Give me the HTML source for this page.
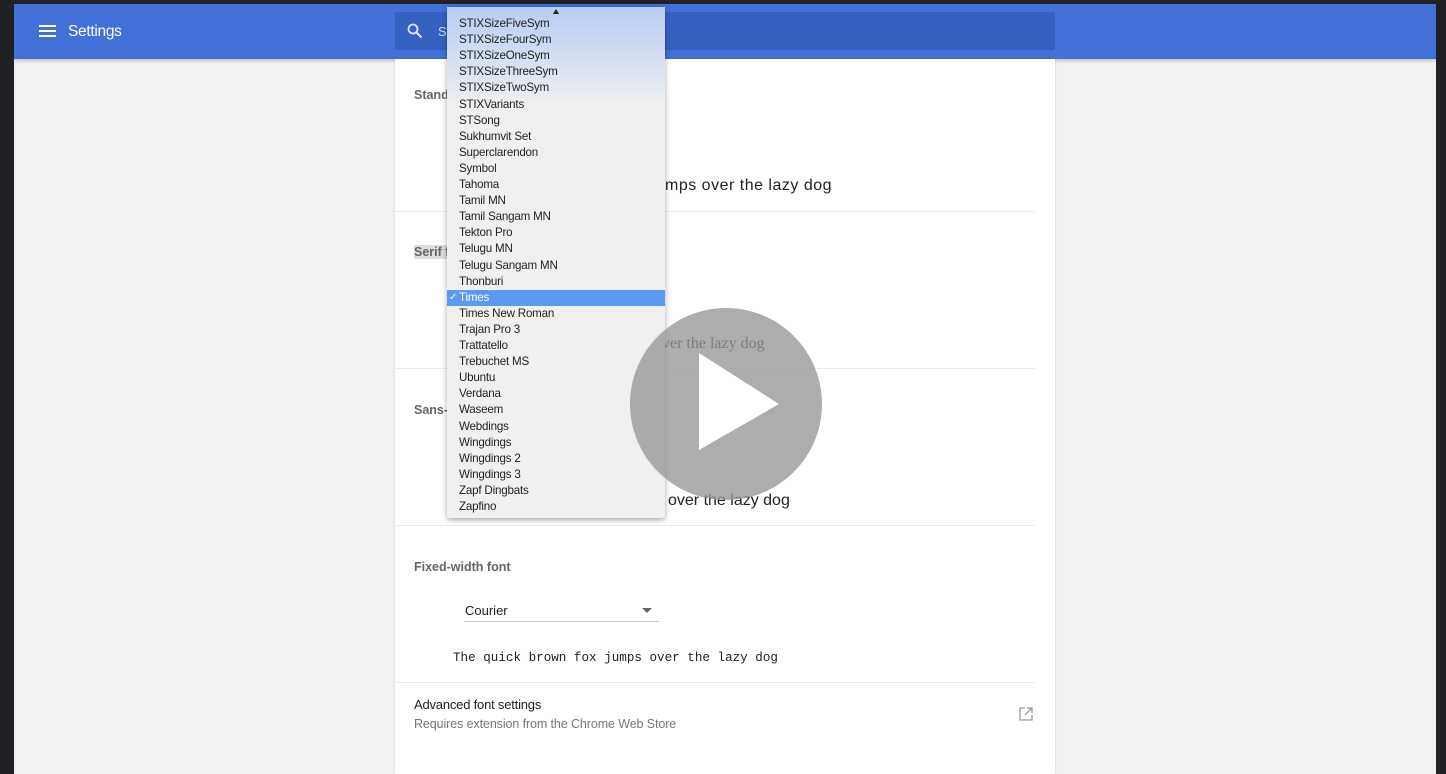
<!DOCTYPE html>
<html><head><meta charset="utf-8"><style>
*{margin:0;padding:0;box-sizing:border-box}
body{width:1446px;height:774px;background:#1f2124;position:relative;overflow:hidden;font-family:"Liberation Sans",sans-serif}
#page{position:absolute;left:14px;top:4px;width:1422px;height:770px;background:#f1f1f1}
#hdr{position:absolute;left:14px;top:4px;width:1422px;height:55px;background:#4070d8;box-shadow:0 2px 3px rgba(0,0,0,.2)}
#search{position:absolute;left:395px;top:12px;width:660px;height:38px;background:#3561c3;border-radius:2px}
#card{position:absolute;left:395px;top:59px;width:660px;height:715px;background:#fff;box-shadow:0 0 2px rgba(0,0,0,.15)}
.t{position:absolute;white-space:nowrap}
.lbl{font-size:12.5px;color:#666;font-weight:bold}
.sep{position:absolute;left:395px;width:640px;height:1px;background:#ececec}
#dd{position:absolute;left:447px;top:7px;width:218px;height:511px;background:#f0f0f0;border-radius:3px;box-shadow:0 2px 6px rgba(0,0,0,.35)}
#dd .g{position:absolute;left:0;top:0;width:218px;height:100px;background:linear-gradient(#b8cdf2,rgba(240,240,240,0))}
.it{position:absolute;left:12px;font-size:11.6px;color:#222;height:16px;line-height:16px;letter-spacing:-0.2px}
#sel{position:absolute;left:0;top:283px;width:218px;height:16px;background:#5a9af3}
</style></head><body>
<div id="page"></div>
<div id="hdr"></div>
<div style="position:absolute;left:39px;top:25px;width:17px;height:2px;background:#fff"></div>
<div style="position:absolute;left:39px;top:30px;width:17px;height:2px;background:#fff"></div>
<div style="position:absolute;left:39px;top:35px;width:17px;height:2px;background:#fff"></div>
<div class="t" style="left:68px;top:23px;font-size:15.5px;color:#fff;letter-spacing:-0.3px">Settings</div>
<div id="search"></div>
<svg style="position:absolute;left:407px;top:23px" width="16" height="16"><circle cx="6" cy="6" r="4.5" stroke="#dfe7f7" stroke-width="1.8" fill="none"/><line x1="9.5" y1="9.5" x2="14.5" y2="14.5" stroke="#dfe7f7" stroke-width="2"/></svg>
<div class="t" style="left:438px;top:24px;font-size:13px;color:#cfdbf3">S</div>
<div id="card"></div>
<div class="sep" style="top:211px;left:395px;width:640px"></div>
<div class="sep" style="top:368px"></div>
<div class="sep" style="top:525px"></div>
<div class="sep" style="top:682px"></div>
<div class="t lbl" style="left:414px;top:88px">Stand</div>
<div class="t lbl" style="left:414px;top:245px;background:#ddd">Serif f</div>
<div class="t lbl" style="left:414px;top:403px">Sans-</div>
<div class="t" style="left:665px;top:177px;font-size:16px;color:#222;letter-spacing:0.5px">mps over the lazy dog</div>
<div class="t" style="left:662px;top:335px;font-size:16px;color:#222;font-family:'Liberation Serif',serif">ver the lazy dog</div>
<div class="t" style="left:668px;top:492px;font-size:16px;color:#222">over the lazy dog</div>
<div class="t lbl" style="left:414px;top:560px">Fixed-width font</div>
<div class="t" style="left:465px;top:603px;font-size:13px;color:#222">Courier</div>
<div style="position:absolute;left:642px;top:608px;border-left:5px solid transparent;border-right:5px solid transparent;border-top:5px solid #666"></div>
<div style="position:absolute;left:464px;top:621px;width:195px;height:1px;background:#ccc"></div>
<div class="t" style="left:453px;top:651px;font-size:12.6px;color:#222;font-family:'Liberation Mono',monospace">The quick brown fox jumps over the lazy dog</div>
<div class="t" style="left:414px;top:697px;font-size:13px;color:#222;letter-spacing:-0.2px">Advanced font settings</div>
<div class="t" style="left:414px;top:717px;font-size:12.5px;color:#777;letter-spacing:-0.1px">Requires extension from the Chrome Web Store</div>
<svg style="position:absolute;left:1018px;top:706px" width="16" height="16"><path d="M7 2H2v12h12V9" stroke="#999" stroke-width="1.3" fill="none"/><path d="M9 2h5v5M14 2L7 9" stroke="#999" stroke-width="1.3" fill="none"/></svg>
<div id="dd"><div class="g"></div><div id="sel"></div>
<div style="position:absolute;left:106px;top:2px;border-left:3px solid transparent;border-right:3px solid transparent;border-bottom:5px solid #222"></div>
<div class="it" style="top:283px;left:2px;color:#fff;font-size:10px">✓</div>
<div id="items"></div>
</div>
<div style="position:absolute;left:630px;top:308px;width:192px;height:192px;border-radius:50%;background:rgba(150,150,150,.78)"></div>
<svg style="position:absolute;left:630px;top:308px" width="192" height="192"><path d="M69 45L149 96L69 142Z" fill="#fff"/></svg>
<script>
var n=["STIXSizeFiveSym","STIXSizeFourSym","STIXSizeOneSym","STIXSizeThreeSym","STIXSizeTwoSym","STIXVariants","STSong","Sukhumvit Set","Superclarendon","Symbol","Tahoma","Tamil MN","Tamil Sangam MN","Tekton Pro","Telugu MN","Telugu Sangam MN","Thonburi","Times","Times New Roman","Trajan Pro 3","Trattatello","Trebuchet MS","Ubuntu","Verdana","Waseem","Webdings","Wingdings","Wingdings 2","Wingdings 3","Zapf Dingbats","Zapfino"];
var h="";for(var i=0;i<n.length;i++){h+='<div class="it" style="top:'+(9+i*16.1)+'px'+(i==17?';color:#fff':'')+'">'+n[i]+'</div>';}
document.getElementById("items").innerHTML=h;
</script>
</body></html>
